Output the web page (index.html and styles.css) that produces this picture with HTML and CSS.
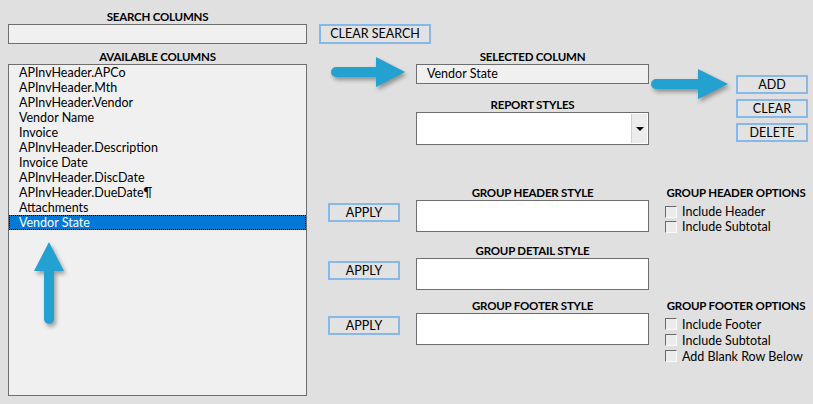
FILE: index.html
```html
<!DOCTYPE html>
<html lang="en">
<head>
    <meta charset="UTF-8">
    <title>Report Columns</title>
    <link rel="stylesheet" href="styles.css">
</head>
<body>
    <div class="form">
        <div class="left">
            <div class="label first">SEARCH COLUMNS</div>
            <div class="text-box"></div>
            <div class="label">AVAILABLE COLUMNS</div>
            <div class="list">
                <div class="item">APInvHeader.APCo</div>
                <div class="item">APInvHeader.Mth</div>
                <div class="item">APInvHeader.Vendor</div>
                <div class="item">Vendor Name</div>
                <div class="item">Invoice</div>
                <div class="item">APInvHeader.Description</div>
                <div class="item">Invoice Date</div>
                <div class="item">APInvHeader.DiscDate</div>
                <div class="item">APInvHeader.DueDate¶</div>
                <div class="item">Attachments</div>
                <div class="item selected">Vendor State</div>
            </div>
        </div>

        <div class="right">
            <div class="btn clear-search">CLEAR SEARCH</div>

            <div class="selected-row">
                <div class="field-col">
                    <div class="label">SELECTED COLUMN</div>
                    <div class="text-box value">Vendor State</div>
                    <div class="label spaced">REPORT STYLES</div>
                    <div class="combo"><div class="combo-btn"><span class="caret"></span></div></div>
                </div>
                <div class="btn-col">
                    <div class="btn">ADD</div>
                    <div class="btn">CLEAR</div>
                    <div class="btn">DELETE</div>
                </div>
            </div>

            <div class="group header-group">
                <div class="apply-col"><div class="btn">APPLY</div></div>
                <div class="field-col">
                    <div class="label">GROUP HEADER STYLE</div>
                    <div class="style-box"></div>
                </div>
                <div class="options">
                    <div class="label">GROUP HEADER OPTIONS</div>
                    <div class="checks">
                        <div class="check"><span class="box"></span>Include Header</div>
                        <div class="check"><span class="box"></span>Include Subtotal</div>
                    </div>
                </div>
            </div>

            <div class="group detail-group">
                <div class="apply-col"><div class="btn">APPLY</div></div>
                <div class="field-col">
                    <div class="label">GROUP DETAIL STYLE</div>
                    <div class="style-box"></div>
                </div>
            </div>

            <div class="group footer-group">
                <div class="apply-col"><div class="btn">APPLY</div></div>
                <div class="field-col">
                    <div class="label">GROUP FOOTER STYLE</div>
                    <div class="style-box"></div>
                </div>
                <div class="options">
                    <div class="label">GROUP FOOTER OPTIONS</div>
                    <div class="checks tall">
                        <div class="check"><span class="box"></span>Include Footer</div>
                        <div class="check"><span class="box"></span>Include Subtotal</div>
                        <div class="check"><span class="box"></span>Add Blank Row Below</div>
                    </div>
                </div>
            </div>
        </div>

        <!-- annotation arrows drawn over the form -->
        <svg class="arrow arrow-one" width="90" height="45" viewBox="0 0 90 45">
            <path d="M11 17 H51 V7 L80 22 L51 37 V27 H11 A5 5 0 0 1 11 17 Z"/>
        </svg>
        <svg class="arrow arrow-two" width="90" height="45" viewBox="0 0 90 45">
            <path d="M11 17 H53 V7 L83 22 L53 37 V27 H11 A5 5 0 0 1 11 17 Z"/>
        </svg>
        <svg class="arrow arrow-up" width="40" height="90" viewBox="0 0 40 90">
            <path d="M19 2 L34 31 H24 V79 A5 5 0 0 1 14 79 V31 H4 Z"/>
        </svg>
    </div>
</body>
</html>
```

FILE: styles.css
```css
body {
    margin: 0;
    background: #e0e0e0;
    font-family: Lato, "Liberation Sans", sans-serif;
    font-size: 12.5px;
    color: #000;
}

.form {
    position: relative;
    display: flex;
    height: 404px;
    padding-left: 8px;
    overflow: hidden;
}

.left {
    width: 299px;
    display: flex;
    flex-direction: column;
}

.label {
    height: 15px;
    line-height: 15px;
    text-align: center;
    font-weight: bold;
    font-size: 11.5px;
    letter-spacing: -0.2px;
    white-space: nowrap;
}

.label.first {
    margin-top: 9px;
}

.left .label:not(.first) {
    margin-top: 5px;
}

.text-box {
    box-sizing: border-box;
    height: 20px;
    background: #f0f0f0;
    border: 1px solid #6e6e6e;
}

.text-box.value {
    padding-left: 10px;
    line-height: 18px;
}

.list {
    box-sizing: border-box;
    height: 332px;
    background: #f0f0f0;
    border: 1px solid #6e6e6e;
}

.item {
    height: 15px;
    line-height: 15px;
    padding-left: 10px;
}

.item.selected {
    background: #0078d7;
    color: #fff;
    outline: 1px dotted #000;
    outline-offset: -1px;
}

.right {
    margin-left: 12px;
    display: flex;
    flex-direction: column;
}

.btn {
    box-sizing: border-box;
    width: 72px;
    height: 19px;
    line-height: 15px;
    text-align: center;
    background: #e2e2e2;
    border: 2px solid #86b9ea;
}

.clear-search {
    width: 112px;
    height: 20px;
    line-height: 16px;
    margin-top: 24px;
}

.selected-row {
    display: flex;
    margin-top: 5px;
}

.field-col {
    width: 233px;
    margin-left: 97px;
    display: flex;
    flex-direction: column;
}

.label.spaced {
    margin-top: 13px;
}

.combo {
    position: relative;
    box-sizing: border-box;
    height: 33px;
    background: #fff;
    border: 1px solid #6e6e6e;
}

.combo-btn {
    position: absolute;
    top: 1px;
    right: 1px;
    bottom: 1px;
    width: 15px;
    background: #ececec;
    border-left: 1px solid #d0d0d0;
    display: flex;
    align-items: center;
    justify-content: center;
}

.caret {
    width: 0;
    height: 0;
    border-left: 4px solid transparent;
    border-right: 4px solid transparent;
    border-top: 4px solid #000;
}

.btn-col {
    margin-left: 87px;
    padding-top: 26px;
    display: flex;
    flex-direction: column;
    gap: 5px;
}

.group {
    display: flex;
}

.header-group {
    margin-top: 40px;
}

.detail-group {
    margin-top: 9px;
}

.footer-group {
    margin-top: 8px;
}

.group .field-col {
    margin-left: 0;
}

.apply-col {
    width: 97px;
}

.apply-col .btn {
    margin-left: 9px;
    margin-top: 18px;
}

.style-box {
    box-sizing: border-box;
    height: 32px;
    background: #fff;
    border: 1px solid #6e6e6e;
}

.options {
    width: 142px;
    margin-left: 16px;
}

.checks {
    margin-top: 4px;
}

.check {
    display: flex;
    align-items: center;
    height: 15px;
    white-space: nowrap;
}

.checks.tall {
    margin-top: 3px;
}

.checks.tall .check {
    height: 16px;
}

.box {
    box-sizing: border-box;
    width: 12px;
    height: 12px;
    margin-right: 5px;
    background: #ececec;
    border: 1px solid;
    border-color: #6a6a6a #fafafa #fafafa #6a6a6a;
}

.arrow {
    position: absolute;
    fill: #23a1d1;
    filter: drop-shadow(2px 3px 2px rgba(0, 0, 0, 0.35));
}

.arrow-one {
    left: 325px;
    top: 50px;
}

.arrow-two {
    left: 645px;
    top: 62px;
}

.arrow-up {
    left: 30px;
    top: 240px;
}
```
